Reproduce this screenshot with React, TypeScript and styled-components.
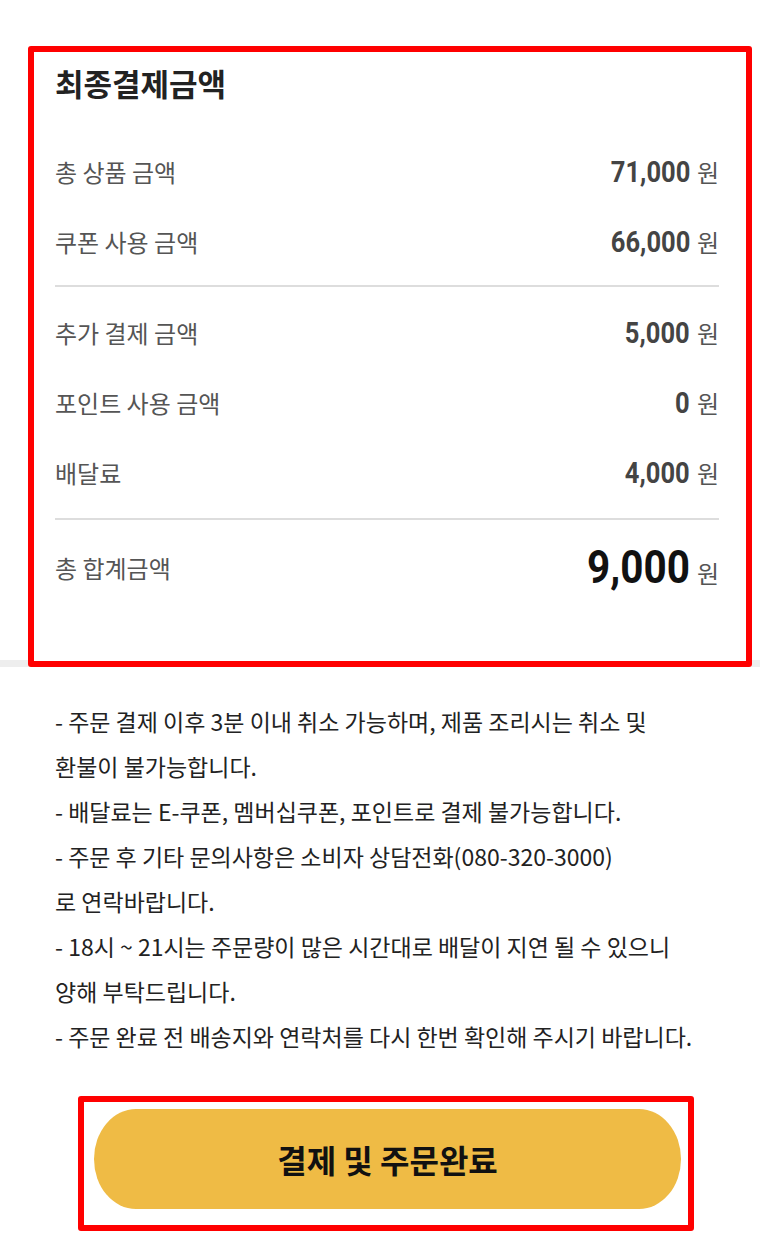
import React from "react";
import styled, { createGlobalStyle } from "styled-components";

const GlobalStyle = createGlobalStyle`
  html, body {
    margin: 0;
    padding: 0;
    background: #ffffff;
  }

  body {
    font-family: "Noto Sans CJK KR", "Noto Sans", sans-serif;
    color: #222222;
  }
`;

const Page = styled.div`
  width: 760px;
  display: flex;
  flex-direction: column;
`;

const SummarySection = styled.section`
  padding: 46px 8px 0 28px;
  background: linear-gradient(
    to bottom,
    #ffffff calc(100% - 7px),
    #eeeeee calc(100% - 7px)
  );
`;

const SummaryCard = styled.div`
  border: 6px solid #ff0000;
  border-radius: 3px;
  background: #ffffff;
  padding: 13px 27px 54px 21px;
  display: flex;
  flex-direction: column;
`;

const Title = styled.h2`
  margin: 0 0 35px;
  font-size: 31px;
  line-height: 36px;
  font-weight: 700;
  color: #222222;
`;

const Row = styled.div<{ $total?: boolean }>`
  height: ${(p) => (p.$total ? 80 : 70)}px;
  display: flex;
  align-items: center;
  justify-content: space-between;
`;

const Label = styled.span`
  font-size: 24px;
  color: #555555;
`;

const Amount = styled.span`
  display: flex;
  align-items: baseline;
  gap: 7px;
`;

const Number = styled.span<{ $total?: boolean }>`
  display: inline-block;
  font-family: Roboto, "Liberation Sans", sans-serif;
  font-weight: 700;
  font-size: ${(p) => (p.$total ? 46 : 29)}px;
  color: ${(p) => (p.$total ? "#111111" : "#444444")};
  transform: scaleX(0.88);
  transform-origin: right center;
`;

const Won = styled.span`
  font-size: 24px;
  color: #555555;
`;

const Divider = styled.hr<{ $top: number; $bottom: number }>`
  width: 100%;
  border: none;
  height: 2px;
  background: #dddddd;
  margin: ${(p) => p.$top}px 0 ${(p) => p.$bottom}px;
`;

const Notes = styled.div`
  padding: 32px 20px 0 55px;
  display: flex;
  flex-direction: column;
`;

const Note = styled.p`
  margin: 0;
  font-size: 23px;
  line-height: 45px;
  color: #222222;
  white-space: nowrap;
`;

const ButtonArea = styled.div`
  padding: 37px 0 27px 78px;
`;

const ButtonFrame = styled.div`
  width: 616px;
  box-sizing: border-box;
  border: 6px solid #ff0000;
  border-radius: 3px;
  padding: 7px 7px 16px 10px;
`;

const SubmitButton = styled.button`
  width: 100%;
  height: 100px;
  border: none;
  border-radius: 42px / 50px;
  background: #efbb45;
  font-family: "Noto Sans CJK KR", sans-serif;
  font-size: 32px;
  font-weight: 700;
  color: #111111;
  cursor: pointer;
`;

type Line = { label: string; value: string };

const itemRows: Line[] = [
  { label: "총 상품 금액", value: "71,000" },
  { label: "쿠폰 사용 금액", value: "66,000" },
];

const extraRows: Line[] = [
  { label: "추가 결제 금액", value: "5,000" },
  { label: "포인트 사용 금액", value: "0" },
  { label: "배달료", value: "4,000" },
];

const notes = [
  ["- 주문 결제 이후 3분 이내 취소 가능하며, 제품 조리시는 취소 및", "환불이 불가능합니다."],
  ["- 배달료는 E-쿠폰, 멤버십쿠폰, 포인트로 결제 불가능합니다."],
  ["- 주문 후 기타 문의사항은 소비자 상담전화(080-320-3000)", "로 연락바랍니다."],
  ["- 18시 ~ 21시는 주문량이 많은 시간대로 배달이 지연 될 수 있으니", "양해 부탁드립니다."],
  ["- 주문 완료 전 배송지와 연락처를 다시 한번 확인해 주시기 바랍니다."],
];

const PriceRow = ({ label, value, total }: Line & { total?: boolean }) => (
  <Row $total={total}>
    <Label>{label}</Label>
    <Amount>
      <Number $total={total}>{value}</Number>
      <Won>원</Won>
    </Amount>
  </Row>
);

const App = () => {
  return (
    <Page>
      <GlobalStyle />
      <SummarySection>
        <SummaryCard>
          <Title>최종결제금액</Title>
          {itemRows.map((r) => (
            <PriceRow key={r.label} {...r} />
          ))}
          <Divider $top={9} $bottom={10} />
          {extraRows.map((r) => (
            <PriceRow key={r.label} {...r} />
          ))}
          <Divider $top={11} $bottom={7} />
          <PriceRow label="총 합계금액" value="9,000" total />
        </SummaryCard>
      </SummarySection>

      <Notes>
        {notes.map((lines) =>
          lines.map((line) => <Note key={line}>{line}</Note>)
        )}
      </Notes>

      <ButtonArea>
        <ButtonFrame>
          <SubmitButton>결제 및 주문완료</SubmitButton>
        </ButtonFrame>
      </ButtonArea>
    </Page>
  );
};

export default App;
